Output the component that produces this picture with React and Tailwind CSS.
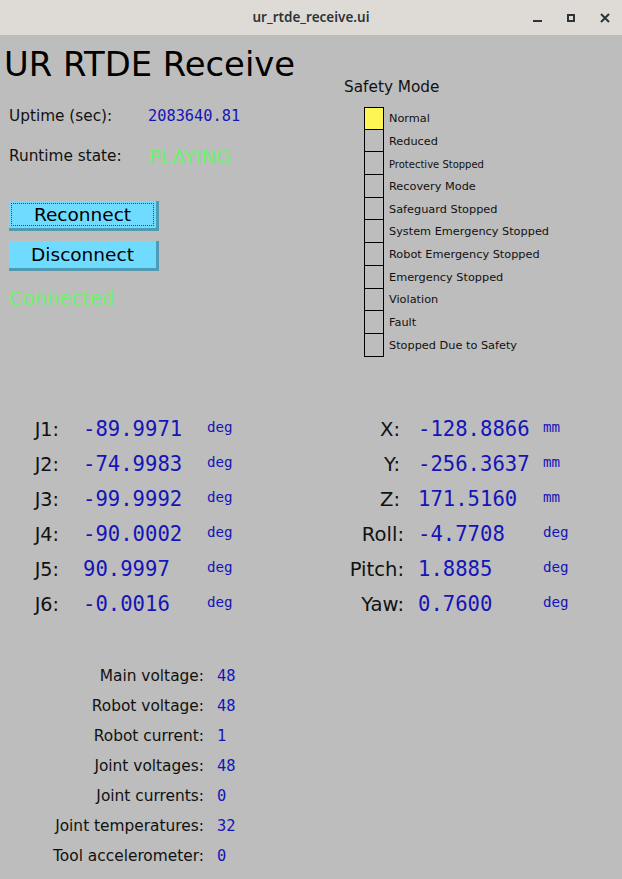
import React from 'react';

const SANS = { fontFamily: '"DejaVu Sans", Verdana, sans-serif' };
const MONO = { fontFamily: '"DejaVu Sans Mono", "Liberation Mono", monospace' };

const safetyModes = [
    { name: 'Normal', on: true },
    { name: 'Reduced' },
    { name: 'Protective Stopped', small: true },
    { name: 'Recovery Mode' },
    { name: 'Safeguard Stopped' },
    { name: 'System Emergency Stopped' },
    { name: 'Robot Emergency Stopped' },
    { name: 'Emergency Stopped' },
    { name: 'Violation' },
    { name: 'Fault' },
    { name: 'Stopped Due to Safety' },
];

const joints = [
    ['J1:', '-89.9971'],
    ['J2:', '-74.9983'],
    ['J3:', '-99.9992'],
    ['J4:', '-90.0002'],
    ['J5:', '90.9997'],
    ['J6:', '-0.0016'],
];

const pose = [
    ['X:', '-128.8866', 'mm', true],
    ['Y:', '-256.3637', 'mm', true],
    ['Z:', '171.5160', 'mm', true],
    ['Roll:', '-4.7708', 'deg'],
    ['Pitch:', '1.8885', 'deg'],
    ['Yaw:', '0.7600', 'deg'],
];

const stats = [
    ['Main voltage:', '48'],
    ['Robot voltage:', '48'],
    ['Robot current:', '1'],
    ['Joint voltages:', '48'],
    ['Joint currents:', '0'],
    ['Joint temperatures:', '32'],
    ['Tool accelerometer:', '0'],
];

function TitleBar() {
    return (
        <div className="h-[35px] bg-[#dedbd7] flex items-center relative shrink-0">
            <div
                className="flex-1 text-center text-[13.5px] font-semibold text-[#2e3436]"
                style={{ fontFamily: '"Noto Sans", "Open Sans", sans-serif' }}
            >
                ur_rtde_receive.ui
            </div>
            {/* window controls */}
            <div className="absolute right-0 top-0 h-[35px] flex items-center">
                <div className="w-[34px] h-[35px] flex items-center justify-center">
                    <div className="w-[9px] h-[2px] bg-[#2e3436] mt-[7px]" />
                </div>
                <div className="w-[34px] h-[35px] flex items-center justify-center">
                    <div className="w-[8px] h-[8px] border-2 border-[#2e3436]" />
                </div>
                <div className="w-[34px] h-[35px] flex items-center justify-center">
                    <svg width="10" height="10" viewBox="0 0 10 10">
                        <path d="M1 1 L9 9 M9 1 L1 9" stroke="#2e3436" strokeWidth="2" />
                    </svg>
                </div>
            </div>
        </div>
    );
}

function CyanButton({ label, focused }) {
    return (
        <button
            type="button"
            className="w-[150px] h-[30px] bg-[#6fdcff] border-r-[3px] border-b-[3px] border-[#4f9bb3] p-[2px] text-[18.5px] text-black block"
            style={SANS}
        >
            <div
                className={`h-full w-full flex items-center justify-center leading-none pt-[2px] ${focused ? 'border border-dotted border-[#9a2020]' : 'border border-transparent'}`}
            >
                {label}
            </div>
        </button>
    );
}

function SafetyPanel() {
    return (
        <div className="pl-[9px] pt-[42px]">
            <div className="h-[20px] leading-[20px] text-[15.3px] text-[#111]" style={SANS}>
                Safety Mode
            </div>
            <div className="mt-[10px] pl-[20px] flex flex-col">
                {safetyModes.map((m, i) => (
                    <div key={m.name} className="flex items-center h-[22.7px]">
                        <div
                            className={`w-[20px] h-[calc(100%+1px)] border border-black ${i > 0 ? '-mt-px' : ''} ${m.on ? 'bg-[#fcf553]' : ''}`}
                        />
                        <span
                            className={`ml-[5px] pt-[2px] text-[#111] ${m.small ? 'text-[10px]' : 'text-[11.3px]'}`}
                            style={SANS}
                        >
                            {m.name}
                        </span>
                    </div>
                ))}
            </div>
        </div>
    );
}

export default function App() {
    return (
        <div className="w-[622px] h-[879px] bg-[#bdbdbd] flex flex-col overflow-hidden">
            <TitleBar />

            {/* Top: heading, status and safety mode */}
            <div className="flex h-[377px] shrink-0">
                <div className="w-[335px] flex flex-col">
                    <h1
                        className="mt-[10px] pl-[4px] text-[33.8px] leading-[40px] text-black"
                        style={SANS}
                    >
                        UR RTDE Receive
                    </h1>
                    <div className="mt-[21px] pl-[9px] flex items-start">
                        <span className="w-[139px] text-[15.3px] leading-[20px] text-[#111]" style={SANS}>
                            Uptime (sec):
                        </span>
                        <span className="text-[15.3px] leading-[20px] text-[#1414b8]" style={MONO}>
                            2083640.81
                        </span>
                    </div>
                    <div className="mt-[20px] pl-[9px] flex items-start">
                        <span className="w-[140px] text-[15.3px] leading-[20px] text-[#111]" style={SANS}>
                            Runtime state:
                        </span>
                        <span className="text-[19.6px] leading-[24px] text-[#6cf26c]" style={SANS}>
                            PLAYING
                        </span>
                    </div>
                    <div className="mt-[31px] pl-[9px] flex flex-col gap-[10px]">
                        <CyanButton label="Reconnect" focused />
                        <CyanButton label="Disconnect" />
                    </div>
                    <div className="mt-[16px] pl-[9px] text-[19.6px] leading-[24px] text-[#6cf26c]" style={SANS}>
                        Connected
                    </div>
                </div>
                <SafetyPanel />
            </div>

            {/* Joints and TCP pose */}
            <div className="flex shrink-0">
                <div className="w-[320px] flex flex-col">
                    {joints.map(([l, v]) => (
                        <div key={l} className="flex items-start h-[35px]">
                            <span className="w-[59px] text-right text-[19.2px] leading-[35px] text-[#111]" style={SANS}>
                                {l}
                            </span>
                            <span className="ml-[24px] w-[124px] text-[20.6px] leading-[35px] text-[#1414b8]" style={MONO}>
                                {v}
                            </span>
                            <span className="text-[14.2px] leading-[31px] text-[#1414b8]" style={MONO}>
                                deg
                            </span>
                        </div>
                    ))}
                </div>
                <div className="flex-1 flex flex-col">
                    {pose.map(([l, v, u, xyz]) => (
                        <div key={l} className="flex items-start h-[35px]">
                            <span
                                className={`w-[84px] text-right text-[19.6px] leading-[35px] text-[#111] ${xyz ? 'pr-[4px]' : ''}`}
                                style={SANS}
                            >
                                {l}
                            </span>
                            <span className="ml-[14px] w-[125px] text-[20.6px] leading-[35px] text-[#1414b8]" style={MONO}>
                                {v}
                            </span>
                            <span className="text-[14.2px] leading-[31px] text-[#1414b8]" style={MONO}>
                                {u}
                            </span>
                        </div>
                    ))}
                </div>
            </div>

            {/* Power / sensor stats */}
            <div className="mt-[40px] flex flex-col">
                {stats.map(([l, v]) => (
                    <div key={l} className="flex items-start h-[30px]">
                        <span className="w-[204px] text-right text-[15.4px] leading-[29px] text-[#111]" style={SANS}>
                            {l}
                        </span>
                        <span className="ml-[13px] text-[15.4px] leading-[29px] text-[#1414b8]" style={MONO}>
                            {v}
                        </span>
                    </div>
                ))}
            </div>
        </div>
    );
}
